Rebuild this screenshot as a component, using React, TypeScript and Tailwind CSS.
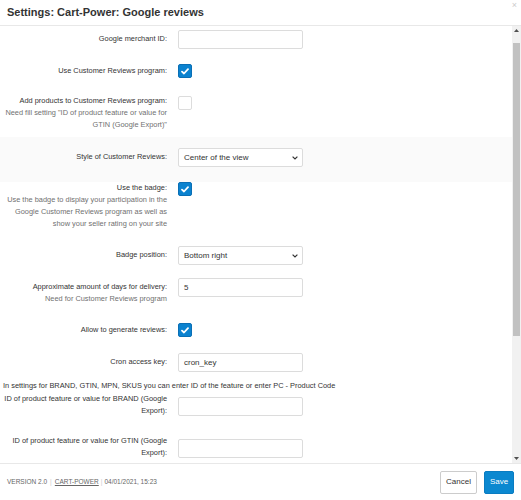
import React from 'react'

const font = { fontFamily: '"Liberation Sans", Arial, sans-serif' }

function Check({ on }: { on?: boolean }) {
  if (!on) {
    return <div className="h-[14px] w-[14px] rounded-[2px] border border-[#dcdcdc] bg-white" />
  }
  return (
    <div className="flex h-[14px] w-[14px] items-center justify-center rounded-[2px] border border-[#0a6fb5] bg-[#0b82cf]">
      <svg width="8" height="7" viewBox="0 0 8 7" fill="none">
        <path d="M1 3.6 L3 5.5 L7 1.2" stroke="white" strokeWidth="1.8" strokeLinecap="round" strokeLinejoin="round" />
      </svg>
    </div>
  )
}

function TextInput({ value }: { value?: string }) {
  return (
    <div className="flex h-[19px] w-[125px] items-center rounded-[2px] border border-[#dcdcdc] bg-white px-[5px] text-[8px] text-[#333]">
      {value}
    </div>
  )
}

function Select({ value }: { value: string }) {
  return (
    <div className="flex h-[19px] w-[125px] items-center justify-between rounded-[2px] border border-[#dcdcdc] bg-white pl-[5px] pr-[4px] text-[8px] text-[#333]">
      <span>{value}</span>
      <svg width="6" height="4" viewBox="0 0 6 4">
        <path d="M0.6 0.6 L3 3 L5.4 0.6" stroke="#333" strokeWidth="1.2" fill="none" />
      </svg>
    </div>
  )
}

interface RowProps {
  label: string
  hint?: React.ReactNode
  height: string
  labelPad?: string
  controlPad?: string
  children: React.ReactNode
  className?: string
}

function Row({ label, hint, height, labelPad = '', controlPad = '', children, className = '' }: RowProps) {
  return (
    <div className={`flex items-start ${height} ${className}`}>
      <div className={`w-[167px] shrink-0 pl-[1px] text-right text-[7.4px] leading-[12px] text-[#333] ${labelPad}`}>
        <div>{label}</div>
        {hint && <div className="text-[#707070]">{hint}</div>}
      </div>
      <div className={`ml-[11px] ${controlPad}`}>{children}</div>
    </div>
  )
}

export default function App() {
  return (
    <div style={font} className="flex h-[500px] w-[521px] flex-col overflow-hidden bg-white">
      <div className="relative flex h-[26px] shrink-0 items-center border-b border-[#e8e8e8] pl-[7px]">
        <h1 className="text-[11px] font-bold text-[#333]">Settings: Cart-Power: Google reviews</h1>
        <span className="absolute right-[4px] top-[1px] text-[9px] leading-none text-[#ccc]">×</span>
      </div>

      <div className="flex min-h-0 flex-1">
        <div className="min-w-0 flex-1 overflow-hidden pt-[4px]">
          <Row label="Google merchant ID:" height="h-[34px]" labelPad="pt-[3px]">
            <TextInput />
          </Row>
          <Row label="Use Customer Reviews program:" height="h-[31px]" labelPad="pt-[1px]">
            <Check on />
          </Row>
          <Row
            label="Add products to Customer Reviews program:"
            hint={<>Need fill setting "ID of product feature or value for GTIN (Google Export)"</>}
            height="h-[42px]"
            controlPad="pt-[1px]"
          >
            <Check />
          </Row>
          <Row
            label="Style of Customer Reviews:"
            height="h-[45px]"
            labelPad="pt-[14px]"
            controlPad="pt-[11px]"
            className="bg-[#fafafa]"
          >
            <Select value="Center of the view" />
          </Row>
          <Row
            label="Use the badge:"
            hint="Use the badge to display your participation in the Google Customer Reviews program as well as show your seller rating on your site"
            height="h-[64px]"
          >
            <Check on />
          </Row>
          <Row label="Badge position:" height="h-[32px]" labelPad="pt-[3px]">
            <Select value="Bottom right" />
          </Row>
          <Row
            label="Approximate amount of days for delivery:"
            hint="Need for Customer Reviews program"
            height="h-[45px]"
            labelPad="pt-[3px]"
          >
            <TextInput value="5" />
          </Row>
          <Row label="Allow to generate reviews:" height="h-[30px]" labelPad="pt-[1px]">
            <Check on />
          </Row>
          <Row label="Cron access key:" height="h-[27px]" labelPad="pt-[3px]">
            <TextInput value="cron_key" />
          </Row>
          <div className="h-[13px] pl-[3px] text-[7.4px] leading-[12px] text-[#333]">
            In settings for BRAND, GTIN, MPN, SKUS you can enter ID of the feature or enter PC - Product Code
          </div>
          <Row label="ID of product feature or value for BRAND (Google Export):" height="h-[42px]" controlPad="pt-[4px]">
            <TextInput />
          </Row>
          <Row label="ID of product feature or value for GTIN (Google Export):" height="h-[42px]" controlPad="pt-[4px]">
            <TextInput />
          </Row>
        </div>

        <div className="flex w-[9px] shrink-0 flex-col items-center bg-[#f1f1f1]">
          <svg className="mt-[3px]" width="5" height="3" viewBox="0 0 5 3">
            <path d="M0 3 L2.5 0 L5 3 Z" fill="#505050" />
          </svg>
          <div className="mt-[11px] h-[293px] w-[7px] bg-[#c1c1c1]" />
          <div className="flex-1" />
          <svg className="mb-[3px]" width="5" height="3" viewBox="0 0 5 3">
            <path d="M0 0 L2.5 3 L5 0 Z" fill="#505050" />
          </svg>
        </div>
      </div>

      <div className="flex h-[37px] shrink-0 items-center justify-between border-t border-[#e8e8e8] pl-[7px] pr-[7px]">
        <div className="flex items-center text-[6.5px] text-[#666]">
          <span>VERSION 2.0</span>
          <span className="mx-[3px] text-[#ccc]">|</span>
          <span className="underline">CART-POWER</span>
          <span className="mx-[2px] text-[#ccc]">|</span>
          <span>04/01/2021, 15:23</span>
        </div>
        <div className="flex items-center gap-[7px]">
          <button className="h-[23px] w-[37px] rounded-[2px] border border-[#ccc] bg-white text-[8px] text-[#333]">
            Cancel
          </button>
          <button className="h-[23px] w-[30px] rounded-[2px] border border-[#0a7cc1] bg-[#0b88d0] text-[8px] text-white">
            Save
          </button>
        </div>
      </div>
    </div>
  )
}
